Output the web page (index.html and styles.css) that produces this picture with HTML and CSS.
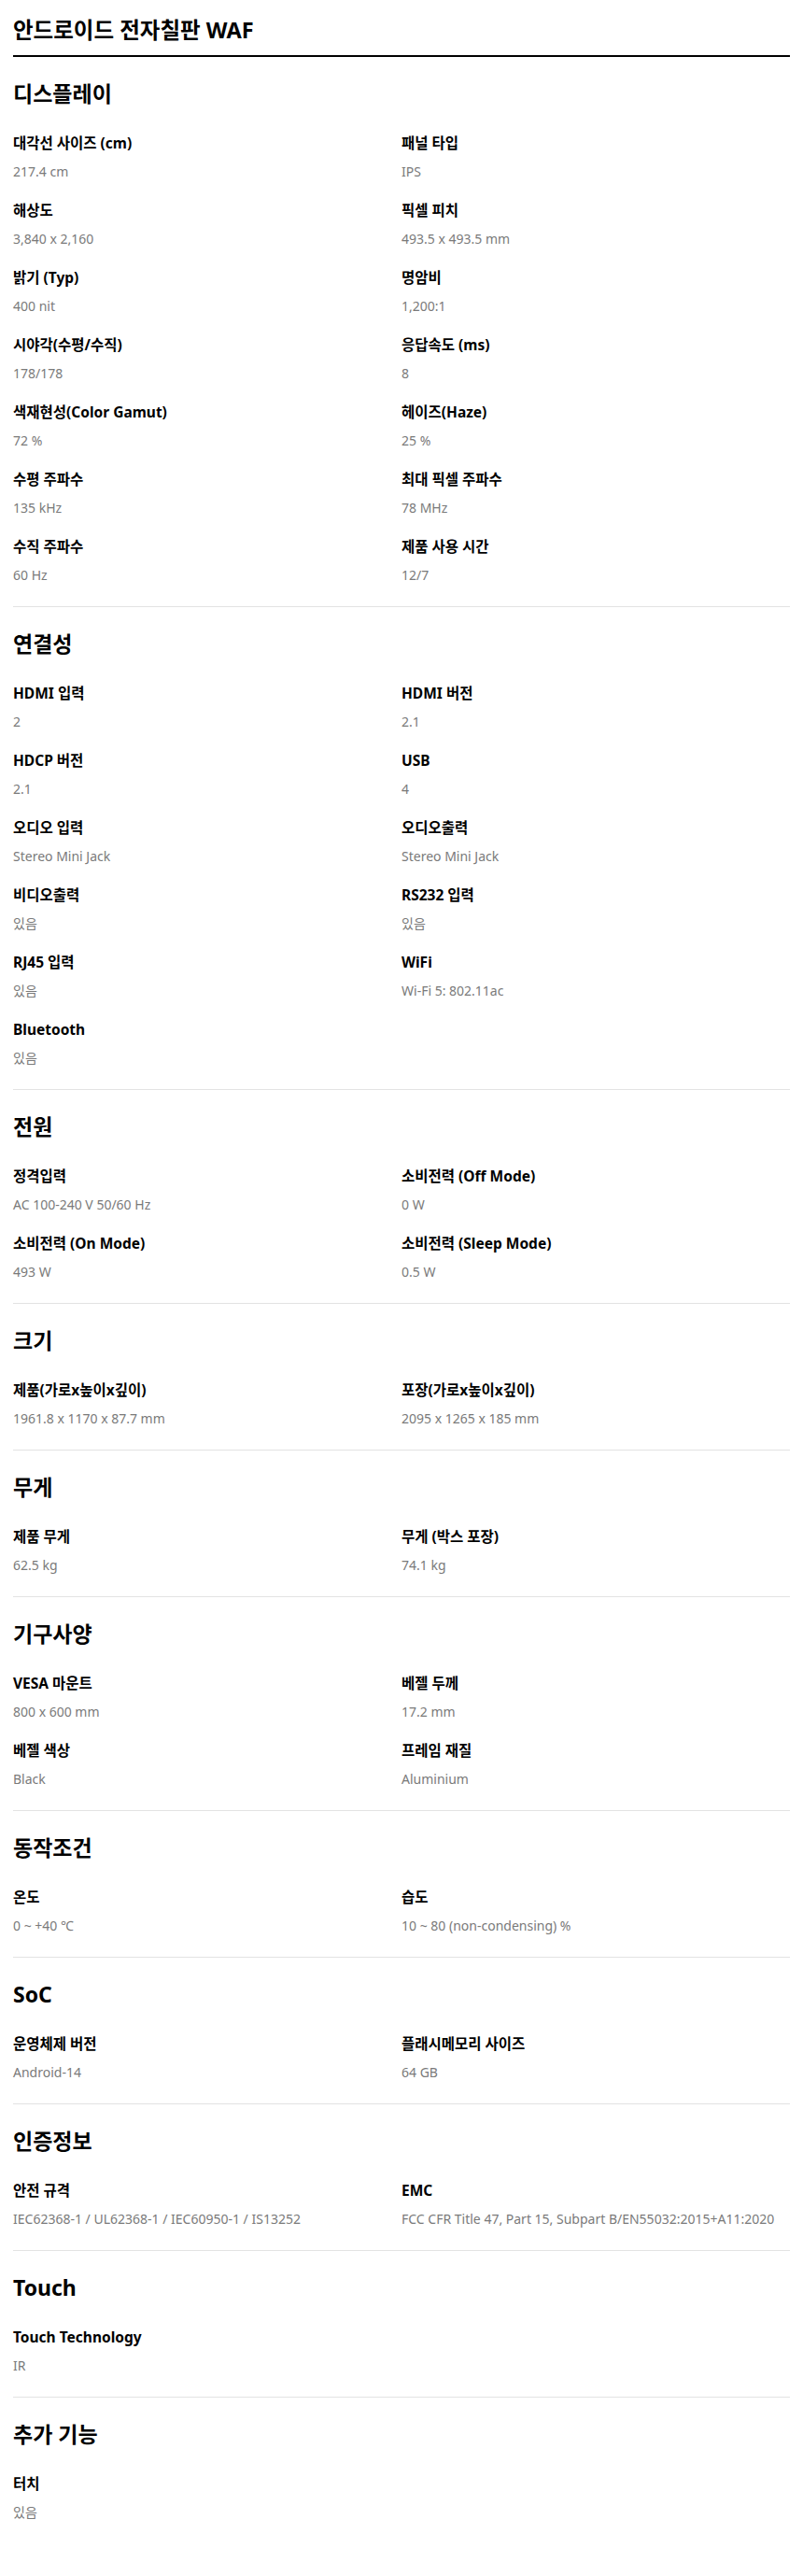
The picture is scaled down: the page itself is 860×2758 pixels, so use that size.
FILE: index.html
```html
<!DOCTYPE html>
<html lang="ko">
<head>
    <meta charset="UTF-8">
    <meta name="viewport" content="width=device-width, initial-scale=1.0">
    <title>안드로이드 전자칠판 WAF - 사양</title>
    <link rel="stylesheet" href="styles.css">
</head>
<body>
    <div class="specs">
        <h1 class="specs-title">안드로이드 전자칠판 WAF</h1>

        <section class="spec-group">
            <h2>디스플레이</h2>
            <dl class="spec-list">
                <div class="spec-item"><dt>대각선 사이즈 (cm)</dt><dd>217.4 cm</dd></div>
                <div class="spec-item"><dt>패널 타입</dt><dd>IPS</dd></div>
                <div class="spec-item"><dt>해상도</dt><dd>3,840 x 2,160</dd></div>
                <div class="spec-item"><dt>픽셀 피치</dt><dd>493.5 x 493.5 mm</dd></div>
                <div class="spec-item"><dt>밝기 (Typ)</dt><dd>400 nit</dd></div>
                <div class="spec-item"><dt>명암비</dt><dd>1,200:1</dd></div>
                <div class="spec-item"><dt>시야각(수평/수직)</dt><dd>178/178</dd></div>
                <div class="spec-item"><dt>응답속도 (ms)</dt><dd>8</dd></div>
                <div class="spec-item"><dt>색재현성(Color Gamut)</dt><dd>72 %</dd></div>
                <div class="spec-item"><dt>헤이즈(Haze)</dt><dd>25 %</dd></div>
                <div class="spec-item"><dt>수평 주파수</dt><dd>135 kHz</dd></div>
                <div class="spec-item"><dt>최대 픽셀 주파수</dt><dd>78 MHz</dd></div>
                <div class="spec-item"><dt>수직 주파수</dt><dd>60 Hz</dd></div>
                <div class="spec-item"><dt>제품 사용 시간</dt><dd>12/7</dd></div>
            </dl>
        </section>

        <section class="spec-group">
            <h2>연결성</h2>
            <dl class="spec-list">
                <div class="spec-item"><dt>HDMI 입력</dt><dd>2</dd></div>
                <div class="spec-item"><dt>HDMI 버전</dt><dd>2.1</dd></div>
                <div class="spec-item"><dt>HDCP 버전</dt><dd>2.1</dd></div>
                <div class="spec-item"><dt>USB</dt><dd>4</dd></div>
                <div class="spec-item"><dt>오디오 입력</dt><dd>Stereo Mini Jack</dd></div>
                <div class="spec-item"><dt>오디오출력</dt><dd>Stereo Mini Jack</dd></div>
                <div class="spec-item"><dt>비디오출력</dt><dd>있음</dd></div>
                <div class="spec-item"><dt>RS232 입력</dt><dd>있음</dd></div>
                <div class="spec-item"><dt>RJ45 입력</dt><dd>있음</dd></div>
                <div class="spec-item"><dt>WiFi</dt><dd>Wi-Fi 5: 802.11ac</dd></div>
                <div class="spec-item"><dt>Bluetooth</dt><dd>있음</dd></div>
            </dl>
        </section>

        <section class="spec-group">
            <h2>전원</h2>
            <dl class="spec-list">
                <div class="spec-item"><dt>정격입력</dt><dd>AC 100-240 V 50/60 Hz</dd></div>
                <div class="spec-item"><dt>소비전력 (Off Mode)</dt><dd>0 W</dd></div>
                <div class="spec-item"><dt>소비전력 (On Mode)</dt><dd>493 W</dd></div>
                <div class="spec-item"><dt>소비전력 (Sleep Mode)</dt><dd>0.5 W</dd></div>
            </dl>
        </section>

        <section class="spec-group">
            <h2>크기</h2>
            <dl class="spec-list">
                <div class="spec-item"><dt>제품(가로x높이x깊이)</dt><dd>1961.8 x 1170 x 87.7 mm</dd></div>
                <div class="spec-item"><dt>포장(가로x높이x깊이)</dt><dd>2095 x 1265 x 185 mm</dd></div>
            </dl>
        </section>

        <section class="spec-group">
            <h2>무게</h2>
            <dl class="spec-list">
                <div class="spec-item"><dt>제품 무게</dt><dd>62.5 kg</dd></div>
                <div class="spec-item"><dt>무게 (박스 포장)</dt><dd>74.1 kg</dd></div>
            </dl>
        </section>

        <section class="spec-group">
            <h2>기구사양</h2>
            <dl class="spec-list">
                <div class="spec-item"><dt>VESA 마운트</dt><dd>800 x 600 mm</dd></div>
                <div class="spec-item"><dt>베젤 두께</dt><dd>17.2 mm</dd></div>
                <div class="spec-item"><dt>베젤 색상</dt><dd>Black</dd></div>
                <div class="spec-item"><dt>프레임 재질</dt><dd>Aluminium</dd></div>
            </dl>
        </section>

        <section class="spec-group">
            <h2>동작조건</h2>
            <dl class="spec-list">
                <div class="spec-item"><dt>온도</dt><dd>0 ~ +40 ℃</dd></div>
                <div class="spec-item"><dt>습도</dt><dd>10 ~ 80 (non-condensing) %</dd></div>
            </dl>
        </section>

        <section class="spec-group">
            <h2>SoC</h2>
            <dl class="spec-list">
                <div class="spec-item"><dt>운영체제 버전</dt><dd>Android-14</dd></div>
                <div class="spec-item"><dt>플래시메모리 사이즈</dt><dd>64 GB</dd></div>
            </dl>
        </section>

        <section class="spec-group">
            <h2>인증정보</h2>
            <dl class="spec-list">
                <div class="spec-item"><dt>안전 규격</dt><dd>IEC62368-1 / UL62368-1 / IEC60950-1 / IS13252</dd></div>
                <div class="spec-item"><dt>EMC</dt><dd>FCC CFR Title 47, Part 15, Subpart B/EN55032:2015+A11:2020</dd></div>
            </dl>
        </section>

        <section class="spec-group">
            <h2>Touch</h2>
            <dl class="spec-list">
                <div class="spec-item"><dt>Touch Technology</dt><dd>IR</dd></div>
            </dl>
        </section>

        <section class="spec-group last">
            <h2>추가 기능</h2>
            <dl class="spec-list">
                <div class="spec-item"><dt>터치</dt><dd>있음</dd></div>
            </dl>
        </section>
    </div>
</body>
</html>
```

FILE: styles.css
```css
body {
    margin: 0;
    padding: 0;
    background-color: #fff;
    color: #000;
    font-family: "Noto Sans", "Noto Sans CJK KR", sans-serif;
}

.specs {
    padding: 0 14px 36px;
}

.specs-title {
    margin: 0;
    padding: 17px 0 12px;
    font-size: 23.5px;
    line-height: 30px;
    font-weight: 700;
    border-bottom: 2px solid #000;
}

.spec-group {
    padding-bottom: 23px;
    border-bottom: 1px solid #e3e3e3;
}

.spec-group.last {
    border-bottom: none;
}

.spec-group h2 {
    margin: 24px 0 28px;
    font-size: 23px;
    line-height: 30px;
    font-weight: 700;
}

.spec-list {
    display: grid;
    grid-template-columns: 1fr 1fr;
    row-gap: 21px;
    margin: 0;
}

.spec-item dt {
    font-size: 15.5px;
    line-height: 20px;
    font-weight: 700;
    color: #000;
}

.spec-item dd {
    margin: 11px 0 0;
    font-size: 14px;
    line-height: 20px;
    color: #7a7a7a;
}
```
